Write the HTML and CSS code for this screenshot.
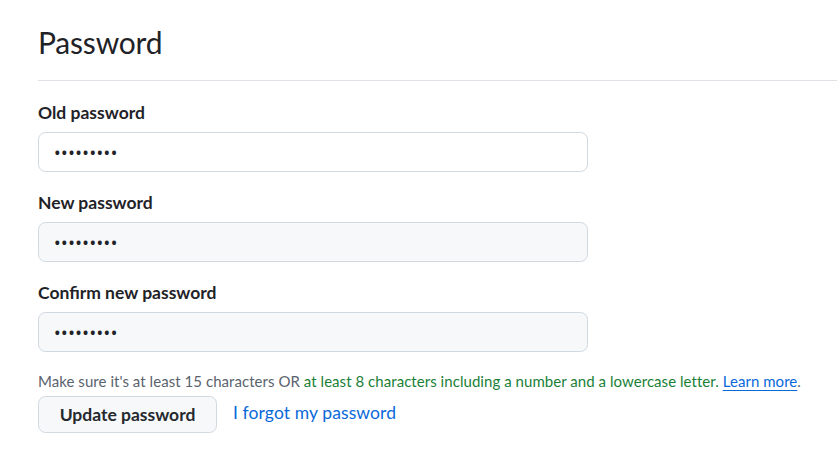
FILE: index.html
```html
<!DOCTYPE html>
<html lang="en">
<head>
<meta charset="utf-8">
<title>Password</title>
<link rel="stylesheet" href="styles.css">
</head>
<body>
<div class="page">
  <div class="subhead">
    <h2 class="subhead-heading">Password</h2>
  </div>
  <form class="form">
    <div class="form-group">
      <label class="label" for="old">Old password</label>
      <input class="control control-focus" id="old" type="password" value="123456789">
    </div>
    <div class="form-group">
      <label class="label" for="new">New password</label>
      <input class="control" id="new" type="password" value="123456789">
    </div>
    <div class="form-group">
      <label class="label" for="confirm">Confirm new password</label>
      <input class="control" id="confirm" type="password" value="123456789">
    </div>
    <p class="note">Make sure it's at least 15 characters OR <span class="ok">at least 8 characters including a number and a lowercase letter.</span> <a class="learn" href="#">Learn more</a>.</p>
    <div class="actions">
      <button class="btn" type="button">Update password</button>
      <a class="forgot" href="#">I forgot my password</a>
    </div>
  </form>
</div>
</body>
</html>
```
FILE: styles.css
```css
html, body {
  margin: 0;
  padding: 0;
  background: #ffffff;
}
body {
  font-family: Lato, "Noto Sans", "Liberation Sans", sans-serif;
  color: #1f2328;
}
.page {
  padding-left: 38px;
}
.subhead {
  padding-top: 24px;
  padding-bottom: 19px;
  border-bottom: 1px solid #dfe3e8;
}
.subhead-heading {
  margin: 0;
  font-size: 30px;
  line-height: 37px;
  font-weight: 400;
  color: #1f2328;
  letter-spacing: -0.2px;
}
.form {
  margin-top: 20px;
  width: 550px;
}
.form-group {
  display: flex;
  flex-direction: column;
  margin-bottom: 19px;
}
.label {
  font-size: 17.5px;
  line-height: 24px;
  font-weight: 700;
  margin-bottom: 7px;
}
.control {
  box-sizing: border-box;
  height: 40px;
  width: 550px;
  margin: 0;
  padding: 0 15px;
  border: 1px solid #d1d9e0;
  border-radius: 7.5px;
  background: #f6f8fa;
  font-family: "Noto Sans", "Liberation Sans", sans-serif;
  font-size: 17.5px;
  color: #1f2328;
  letter-spacing: 0.5px;
  outline: none;
}
.control-focus {
  background: #ffffff;
}
.note {
  margin: 1px 0 0 0;
  width: 800px;
  font-size: 15px;
  line-height: 20px;
  letter-spacing: 0.05px;
  color: #59636e;
  white-space: nowrap;
}
.ok {
  color: #1a7f37;
}
.learn {
  color: #0969da;
  text-decoration: underline;
  text-underline-offset: 3px;
}
.actions {
  display: flex;
  align-items: center;
  gap: 16px;
  margin-top: 5px;
}
.btn {
  box-sizing: border-box;
  height: 37px;
  width: 179px;
  padding: 0;
  border: 1px solid #d1d9e0;
  border-radius: 7.5px;
  background: #f6f8fa;
  font-family: inherit;
  font-size: 17.5px;
  font-weight: 700;
  color: #25292e;
}
.forgot {
  color: #0969da;
  text-decoration: none;
  font-size: 17.5px;
  line-height: 24px;
  letter-spacing: 0.1px;
  margin-top: -4px;
}
```
